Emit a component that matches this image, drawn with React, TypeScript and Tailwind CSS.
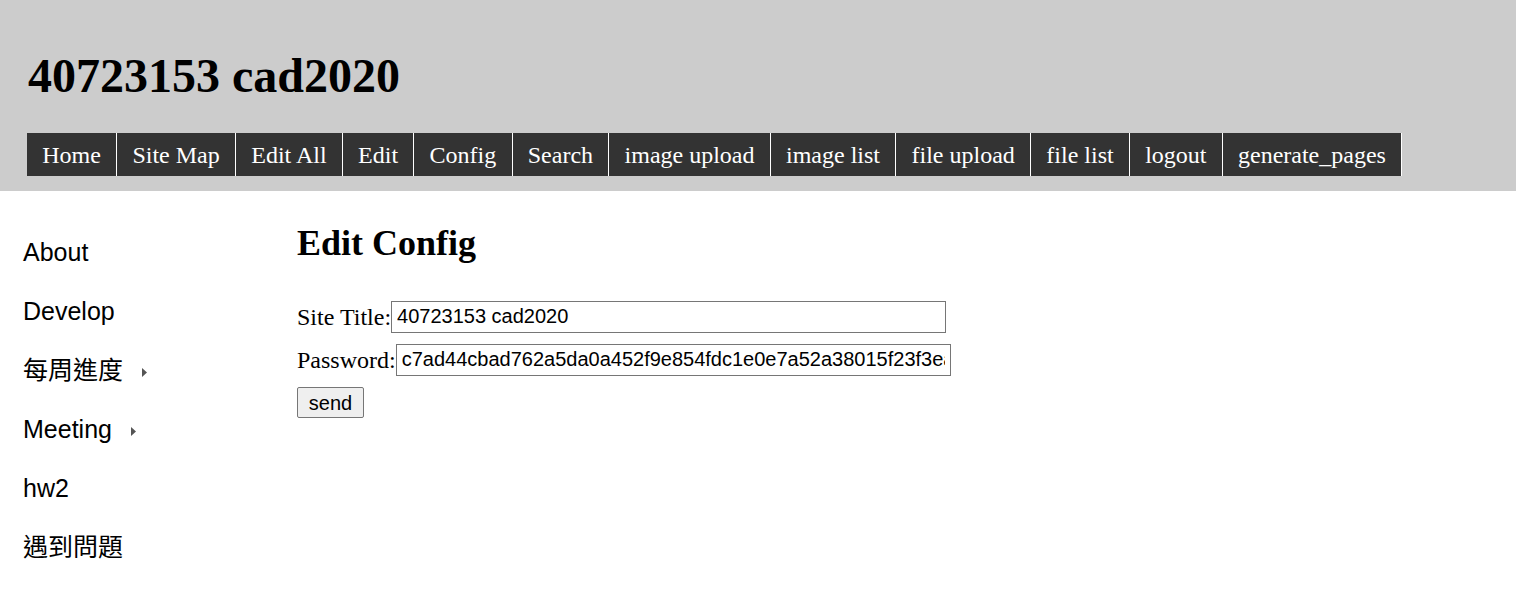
import React from "react";

const navItems = [
  "Home",
  "Site Map",
  "Edit All",
  "Edit",
  "Config",
  "Search",
  "image upload",
  "image list",
  "file upload",
  "file list",
  "logout",
  "generate_pages",
];

const sideItems: { label: string; sub?: boolean }[] = [
  { label: "About" },
  { label: "Develop" },
  { label: "每周進度", sub: true },
  { label: "Meeting", sub: true },
  { label: "hw2" },
  { label: "遇到問題" },
];

const serif = "font-['Liberation_Serif','Times_New_Roman',serif]";
const sans = "font-['Liberation_Sans',Arial,'Noto_Sans_CJK_TC',sans-serif]";

function Caret() {
  return (
    <svg width="5" height="9" viewBox="0 0 5 9" className="ml-[19px] mt-[4px]">
      <path d="M0 0 L5 4.5 L0 9 Z" fill="#555555" />
    </svg>
  );
}

export default function App() {
  return (
    <div className={`min-h-[606px] bg-white text-black ${serif}`}>
      <header className="bg-[#cccccc] px-[27px] pt-[48px] pb-[15px]">
        <h1 className="ml-[1px] text-[48px] font-bold leading-[55px]">
          40723153 cad2020
        </h1>
        <nav className="mt-[30px] flex">
          {navItems.map((item) => (
            <a
              key={item}
              href="#"
              className="border-r border-white bg-[#333333] px-[15.25px] pt-[9px] pb-[7px] text-[24px] leading-[27px] text-white"
            >
              {item}
            </a>
          ))}
        </nav>
      </header>

      <div className="flex">
        <aside className={`w-[297px] shrink-0 pl-[23px] pt-[32px] ${sans}`}>
          <ul>
            {sideItems.map((s) => (
              <li key={s.label} className="flex h-[59px] items-center">
                <span className="text-[25px] leading-[29px]">{s.label}</span>
                {s.sub && <Caret />}
              </li>
            ))}
          </ul>
        </aside>

        <main className="pt-[32px]">
          <h2 className="text-[36px] font-bold leading-[41px]">Edit Config</h2>
          <form className="mt-[37px]">
            <div className="flex h-[31px] items-center text-[24px]">
              <label>Site Title:</label>
              <input
                type="text"
                defaultValue="40723153 cad2020"
                className={`h-[32px] w-[555px] border border-[#767676] px-[5px] text-[20px] ${sans}`}
              />
            </div>
            <div className="mt-[12px] flex h-[31px] items-center text-[24px]">
              <label>Password:</label>
              <input
                type="text"
                defaultValue="c7ad44cbad762a5da0a452f9e854fdc1e0e7a52a38015f23f3ea4b"
                className={`h-[32px] w-[555px] border border-[#767676] px-[5px] text-[20px] ${sans}`}
              />
            </div>
            <button
              type="button"
              className={`mt-[12px] h-[31px] w-[67px] rounded-[2px] border border-[#767676] bg-[#efefef] text-[20px] leading-none ${sans}`}
            >
              send
            </button>
          </form>
        </main>
      </div>
    </div>
  );
}
